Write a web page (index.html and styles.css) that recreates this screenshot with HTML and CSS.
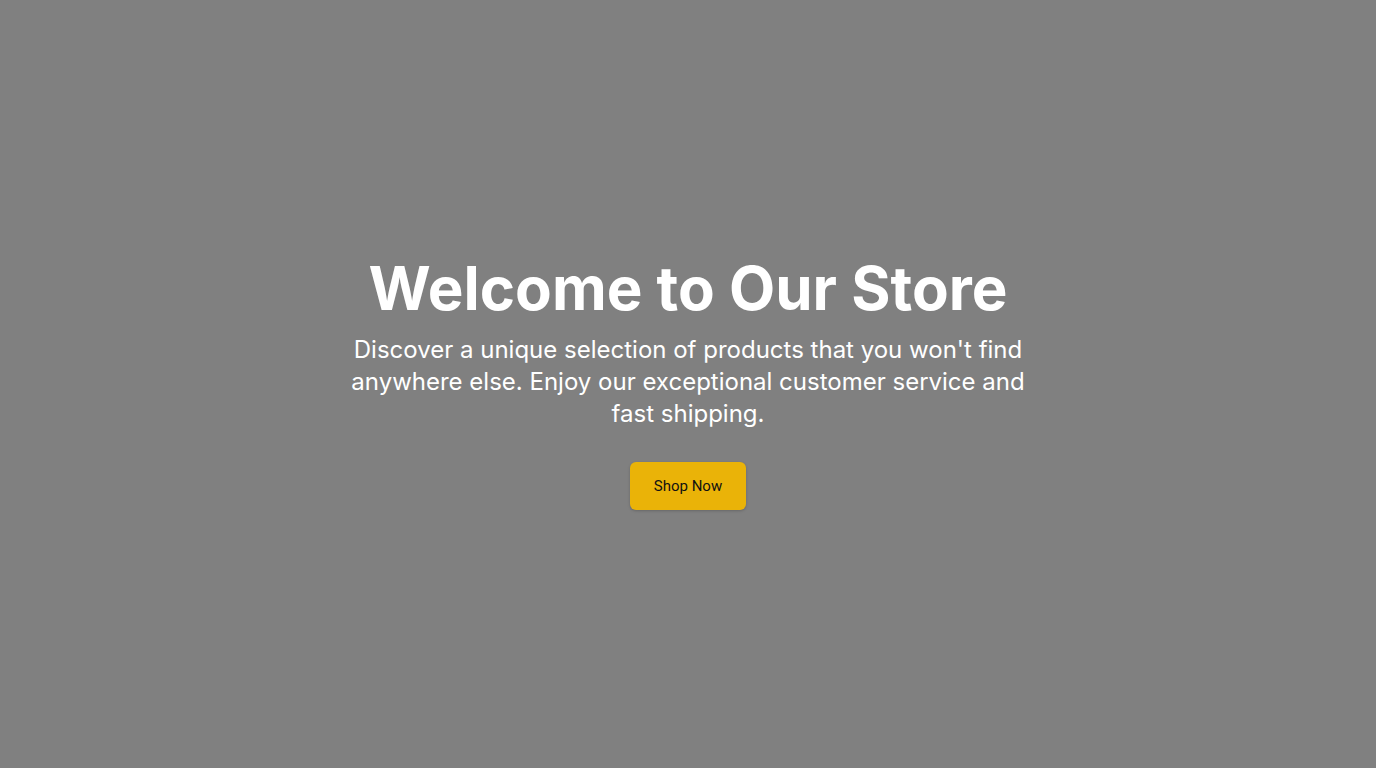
FILE: index.html
```html
<!DOCTYPE html>
<html lang="en">
<head>
<meta charset="utf-8">
<title>Welcome to Our Store</title>
<link rel="stylesheet" href="styles.css">
</head>
<body>
<section class="hero">
  <div class="hero-content">
    <h1 class="hero-title">Welcome to Our Store</h1>
    <p class="hero-text">Discover a unique selection of products that you won't find anywhere else. Enjoy our exceptional customer service and fast shipping.</p>
    <button class="hero-button">Shop Now</button>
  </div>
</section>
</body>
</html>
```

FILE: styles.css
```css
* { box-sizing: border-box; }
html, body { margin: 0; padding: 0; }
body {
  background: #808080;
  font-family: Inter, "Noto Sans", sans-serif;
}
.hero {
  min-height: 768px;
  display: flex;
  align-items: center;
  justify-content: center;
}
.hero-content {
  max-width: 680px;
  display: flex;
  flex-direction: column;
  align-items: center;
  text-align: center;
}
.hero-title {
  margin: 0 0 16px;
  font-size: 60px;
  line-height: 60px;
  font-weight: 700;
  color: #ffffff;
  white-space: nowrap;
}
.hero-text {
  margin: 0 0 32px;
  font-size: 24px;
  line-height: 32px;
  color: #ffffff;
}
.hero-button {
  font-family: Roboto, "Liberation Sans", sans-serif;
  font-size: 15px;
  line-height: 20px;
  padding: 14px 24px;
  border: none;
  border-radius: 6px;
  background: #eab308;
  color: #111111;
  box-shadow: 0 1px 3px rgba(0,0,0,0.2);
  cursor: pointer;
}
```
